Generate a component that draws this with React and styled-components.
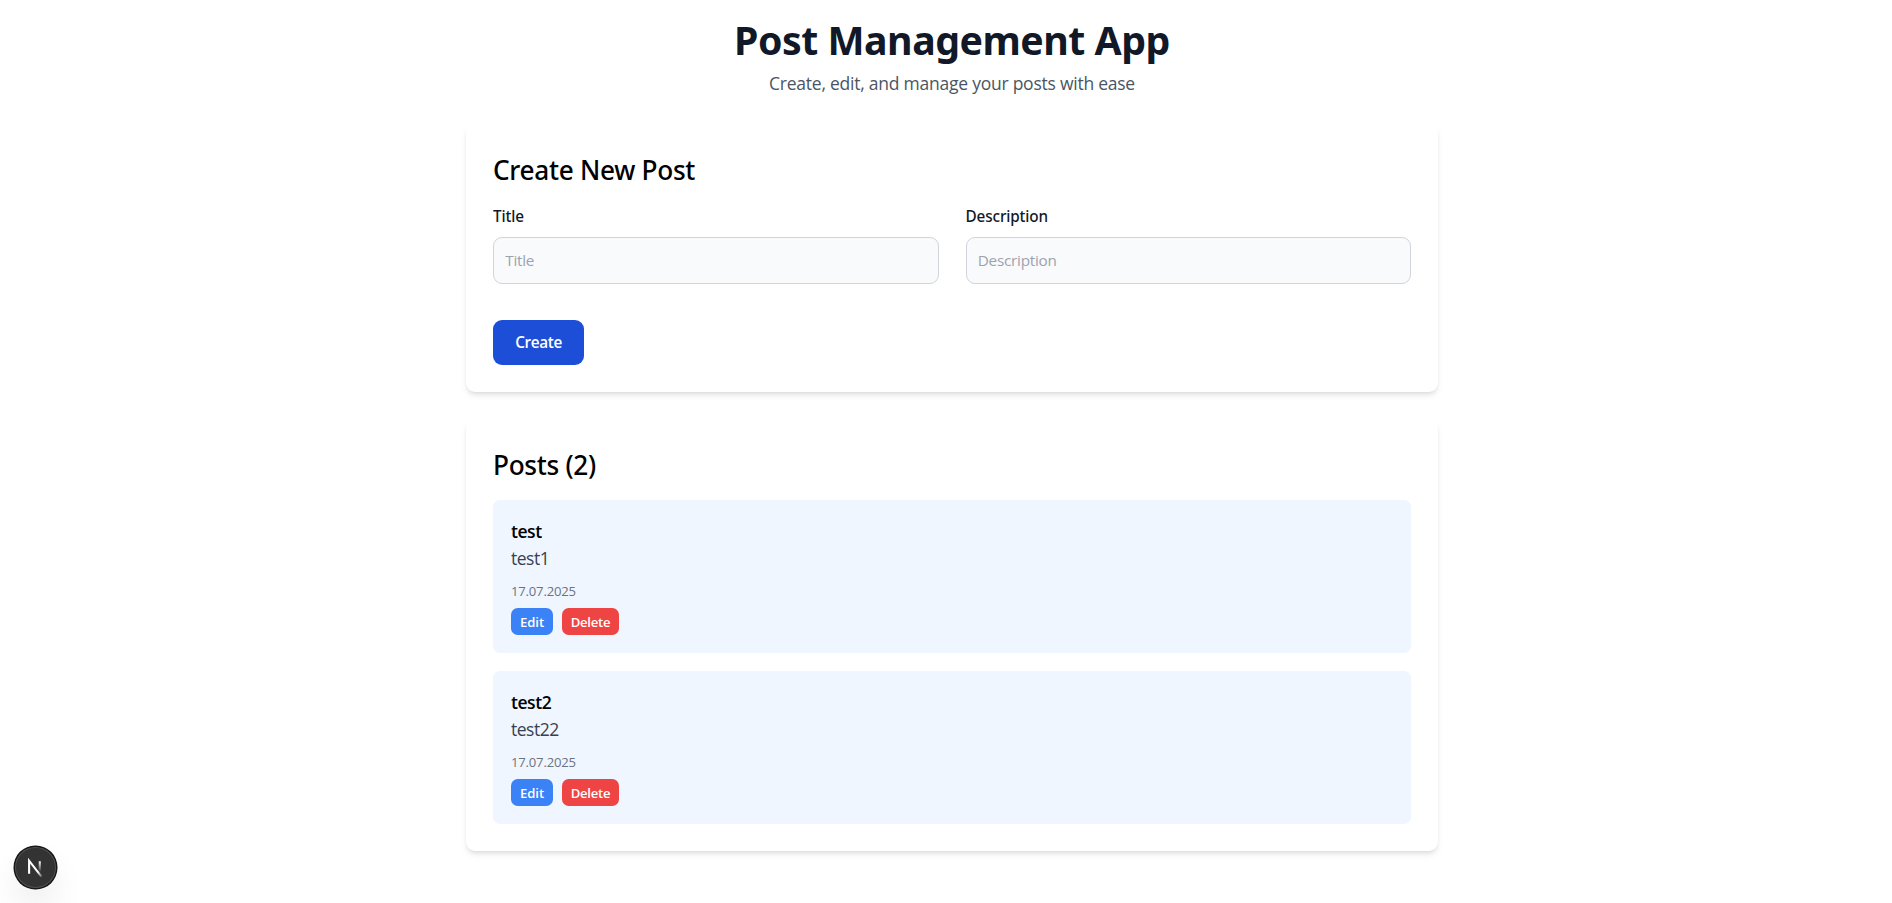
import React from "react";
import styled, { createGlobalStyle } from "styled-components";

const GlobalStyle = createGlobalStyle`
  *, *::before, *::after { box-sizing: border-box; }
  html { font-size: 18px; }
  body {
    margin: 0;
    padding-left: 12px;
    background: #fff;
    color: #000;
    font-family: "Open Sans", "Noto Sans", sans-serif;
  }
  h1, h2, h3, p { margin: 0; }
`;

const Page = styled.main`
  width: 972px;
  margin: 0 auto;
  padding-top: 16px;
`;

const Header = styled.header`
  margin-bottom: 27px;
  text-align: center;
`;

const AppTitle = styled.h1`
  height: 45px;
  margin-bottom: 9px;
  padding-top: 1.5px;
  color: #111827;
  font-family: "Noto Sans", sans-serif;
  font-size: 39.3px;
  font-weight: 700;
  line-height: 45px;
  letter-spacing: -0.5px;
`;

const Subtitle = styled.p`
  height: 27px;
  color: #4b5563;
  font-size: 17.5px;
  line-height: 26px;
  letter-spacing: -0.24px;
`;

const Card = styled.section`
  margin-bottom: 27px;
  padding: 27px;
  border-radius: 9px;
  background: #fff;
  box-shadow: 0 4px 6px -1px rgba(0, 0, 0, 0.1), 0 2px 4px -2px rgba(0, 0, 0, 0.1);
`;

const CardTitle = styled.h2`
  height: 36px;
  margin-bottom: 18px;
  padding-top: 1px;
  font-family: "Noto Sans", sans-serif;
  font-size: 26.2px;
  font-weight: 500;
  line-height: 36px;
  letter-spacing: -0.3px;
`;

const Fields = styled.div`
  display: grid;
  grid-template-columns: 1fr 1fr;
  gap: 27px;
  margin-bottom: 36px;
`;

const Label = styled.label`
  display: block;
  height: 23px;
  margin-bottom: 9px;
  color: #111827;
  font-family: "Noto Sans", sans-serif;
  font-size: 15.3px;
  font-weight: 500;
  line-height: 22px;
  letter-spacing: -0.13px;
`;

const Input = styled.input`
  display: block;
  width: 100%;
  height: 47px;
  padding: 0 11.25px 1px;
  border: 1px solid #d1d5db;
  border-radius: 9px;
  background: #f9fafb;
  color: #111827;
  font-family: inherit;
  font-size: 15.3px;
  letter-spacing: -0.25px;

  &::placeholder { color: #9ca3af; opacity: 1; }
`;

const Button = styled.button`
  display: block;
  border: 0;
  color: #fff;
  font-family: inherit;
  font-weight: 600;
  text-align: center;
  cursor: pointer;
`;

const CreateButton = styled(Button)`
  width: 91px;
  height: 45px;
  padding: 0 0 1px;
  border-radius: 9px;
  background: #1d4ed8;
  font-size: 15.3px;
  letter-spacing: -0.35px;
`;

const PostList = styled.div`
  display: grid;
  gap: 18px;
`;

const Post = styled.article`
  padding: 18px;
  border-radius: 6.75px;
  background: #eff6ff;
`;

const PostTitle = styled.h3`
  height: 27px;
  font-size: 17.5px;
  font-weight: 600;
  line-height: 26px;
  letter-spacing: -0.45px;
`;

const PostText = styled.p`
  height: 27px;
  color: #374151;
  font-size: 17.5px;
  line-height: 26px;
  letter-spacing: -0.5px;
`;

const PostDate = styled.p`
  height: 18px;
  margin: 9px 0;
  color: #6b7280;
  font-size: 13.1px;
  line-height: 20px;
  letter-spacing: -0.2px;
`;

const Actions = styled.div`
  display: flex;
  gap: 9px;
`;

const SmallButton = styled(Button)`
  width: ${(p) => (p.$danger ? "57px" : "42px")};
  height: 27px;
  padding: 1px 0 0;
  border-radius: 6.75px;
  background: ${(p) => (p.$danger ? "#ef4444" : "#3b82f6")};
  font-size: 13.1px;
  line-height: 18px;
  letter-spacing: ${(p) => (p.$danger ? "-0.25px" : "-0.05px")};
`;

const DevBadge = styled.div`
  position: fixed;
  left: 15.2px;
  bottom: 15.5px;
  width: 40.5px;
  height: 40.5px;
  border-radius: 50%;
  background: #333;
  box-shadow: 0 0 0 1.5px #171717, inset 0 0 0 1px rgba(255, 255, 255, 0.14),
    0 18px 36px -9px rgba(0, 0, 0, 0.24);

  svg {
    display: block;
    width: 100%;
    height: 100%;
  }
`;

const fields = ["Title", "Description"];

const posts = [
  { title: "test", text: "test1", date: "17.07.2025" },
  { title: "test2", text: "test22", date: "17.07.2025" },
];

function NextMark() {
  return (
    <svg viewBox="0 0 36 36" fill="none">
      <defs>
        <linearGradient id="diagonal" x1="9.96" y1="11.12" x2="15.48" y2="17.97" gradientUnits="userSpaceOnUse">
          <stop stopColor="#fff" />
          <stop offset="0.8" stopColor="#fff" stopOpacity="0" />
          <stop offset="1" stopColor="#fff" stopOpacity="0" />
        </linearGradient>
        <linearGradient id="stem" x1="11.82" y1="1.4" x2="11.79" y2="11" gradientUnits="userSpaceOnUse">
          <stop stopColor="#fff" />
          <stop offset="1" stopColor="#fff" stopOpacity="0" />
        </linearGradient>
      </defs>
      <g transform="translate(10.2 11.2)">
        <path d="M13.3 15.2 2.34 1V12.6" stroke="url(#diagonal)" strokeWidth="1.86" />
        <path d="M11.825 1.5V13.1" stroke="url(#stem)" strokeWidth="1.86" />
      </g>
    </svg>
  );
}

export default function App() {
  return (
    <>
      <GlobalStyle />
      <Page>
        <Header>
          <AppTitle>Post Management App</AppTitle>
          <Subtitle>Create, edit, and manage your posts with ease</Subtitle>
        </Header>
        <Card>
          <CardTitle>Create New Post</CardTitle>
          <Fields>
            {fields.map((name) => (
              <div key={name}>
                <Label htmlFor={name}>{name}</Label>
                <Input id={name} placeholder={name} />
              </div>
            ))}
          </Fields>
          <CreateButton>Create</CreateButton>
        </Card>
        <Card>
          <CardTitle>Posts ({posts.length})</CardTitle>
          <PostList>
            {posts.map((post) => (
              <Post key={post.title}>
                <PostTitle>{post.title}</PostTitle>
                <PostText>{post.text}</PostText>
                <PostDate>{post.date}</PostDate>
                <Actions>
                  <SmallButton>Edit</SmallButton>
                  <SmallButton $danger>Delete</SmallButton>
                </Actions>
              </Post>
            ))}
          </PostList>
        </Card>
      </Page>
      <DevBadge>
        <NextMark />
      </DevBadge>
    </>
  );
}
